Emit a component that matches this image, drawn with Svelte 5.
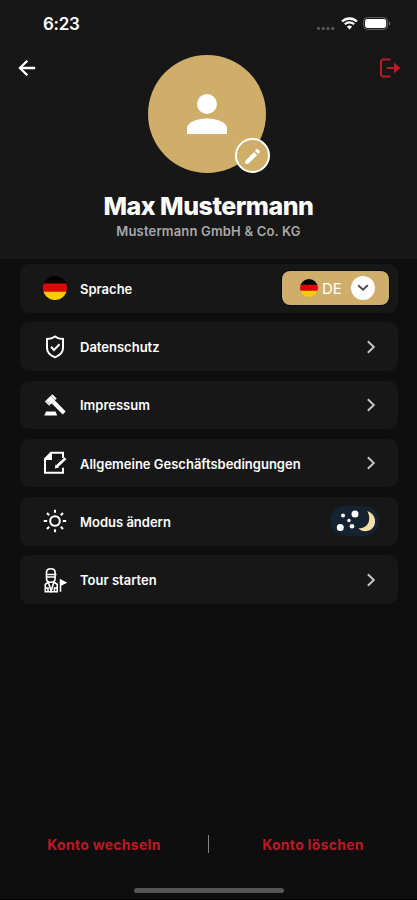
<script lang="ts">
	type Row = { id: string; label: string };

	const rows: Row[] = [
		{ id: 'language', label: 'Sprache' },
		{ id: 'privacy', label: 'Datenschutz' },
		{ id: 'imprint', label: 'Impressum' },
		{ id: 'terms', label: 'Allgemeine Geschäftsbedingungen' },
		{ id: 'mode', label: 'Modus ändern' },
		{ id: 'tour', label: 'Tour starten' }
	];
</script>

{#snippet flag(size: number)}
	<svg class="flag" width={size} height={size} viewBox="0 0 24 24">
		<clipPath id="flag-{size}"><circle cx="12" cy="12" r="12" /></clipPath>
		<g clip-path="url(#flag-{size})">
			<path fill="#000" d="M0 0h24v8H0z" />
			<path fill="#dc0808" d="M0 7.5h24V16H0z" />
			<path fill="#ffcb05" d="M0 15.7h24V24H0z" />
		</g>
	</svg>
{/snippet}

<div class="screen">
	<header>
		<div class="status">
			<span class="time">6:23</span>
			<div class="signals">
				<i class="dots"></i>
				<svg width="17" height="13" viewBox="0 0 17 13" fill="none" stroke="#fff">
					<path stroke-width="2.3" d="M1.1 4.5a10.6 10.6 0 0 1 14.8 0" />
					<path stroke-width="2.1" d="M3.8 7.3a6.7 6.7 0 0 1 9.4 0" />
					<path fill="#fff" stroke="none" d="M5.9 9.6a3.8 3.8 0 0 1 5.2 0l-2.6 2.9z" />
				</svg>
				<svg class="battery" width="28" height="13" viewBox="0 0 28 13">
					<rect x=".6" y=".6" width="24" height="11.8" rx="3.8" fill="none" stroke="#666" />
					<rect x="2" y="2" width="21.2" height="9" rx="2.4" fill="#fff" />
					<path d="M26 4.5c1.5.8 1.5 3.2 0 4z" fill="#777" />
				</svg>
			</div>
		</div>

		<div class="top">
			<button class="back" aria-label="Zurück">
				<svg width="18" height="18" viewBox="0 0 18 18" fill="none" stroke="#fff" stroke-width="2.3">
					<path d="M17.2 9H2.2M9.3 1.8 2 9l7.3 7.2" />
				</svg>
			</button>
			<div class="avatar">
				<svg width="40" height="40" viewBox="0 0 40 40" fill="#fff">
					<circle cx="20" cy="10" r="10" />
					<path d="M0 40v-5.500C0 27.500 12 24.500 20 24.500s20 3 20 10V40z" />
				</svg>
				<button class="edit" aria-label="Bearbeiten">
					<svg width="16" height="16" viewBox="0 0 16 16" fill="#fff">
						<path d="M.3 12.700v3h3l8.900-8.600-3.200-3.200zM14.700 4.600c.5-.5.5-1 0-1.500L12.900 1.300c-.5-.5-1-.5-1.500 0L9.900 2.800l3.300 3.300z" />
					</svg>
				</button>
			</div>
			<button class="logout" aria-label="Abmelden">
				<svg width="22" height="20" viewBox="0 0 22 20" fill="none" stroke="#bc1a24" stroke-width="2">
					<path d="M11.5 1.5H4Q2 1.5 2 3.5v13q0 2 2 2h7.5M7.800 10h12" />
					<path fill="#bc1a24" stroke="none" d="m15 4.400 6.500 5.600-6.500 5.600z" />
				</svg>
			</button>
		</div>

		<h1>Max Mustermann</h1>
		<p>Mustermann GmbH &amp; Co. KG</p>
	</header>

	<main>
		{#each rows as row}
			<div class="row">
				<div class="icon">
					{#if row.id === 'language'}
						{@render flag(24)}
					{:else if row.id === 'privacy'}
						<svg width="24" height="24" viewBox="0 0 24 24" fill="none" stroke="#fff" stroke-width="2">
							<path d="M12 1.5c2.3 1.7 5 2.4 8 2.4V13c0 4-3 7.3-8 9.4C7 20.3 4 17 4 13V3.9c3 0 5.7-.7 8-2.4z" />
							<path d="m8 11.8 3 3.2 5.5-5.7" />
						</svg>
					{:else if row.id === 'imprint'}
						<svg width="24" height="24" viewBox="0 0 24 24" fill="#fff">
							<path d="M3 18.5h9.5l1.7 4H1.3z" />
							<path d="m11 6.6 11.7 11.8-3 3.2L8.1 9.8z" />
							<path d="m9.3 1.2 4.4 4.2-7.5 7.4-4.4-4.3z" />
							<path stroke="#171717" stroke-width=".4" d="m7.4 2.2 5 5M2.5 7l5 5" />
						</svg>
					{:else if row.id === 'terms'}
						<svg width="24" height="24" viewBox="0 0 24 24" fill="none" stroke="#fff" stroke-width="2">
							<path d="M20 7V1.8H8L2 8v13.7h18v-5" />
							<path fill="#fff" stroke="none" d="M9 1.500V9H1.500z" />
							<path stroke-width="2.6" d="m14 15.3 8.500-8.100" />
							<path fill="#fff" stroke="none" d="m12.500 13.500 3.500 3-4.200 1z" />
						</svg>
					{:else if row.id === 'mode'}
						<svg width="24" height="24" viewBox="0 0 24 24" fill="none" stroke="#fff" stroke-width="2.1">
							<circle cx="12" cy="12" r="4.8" />
							<path d="M12 .8v3M12 20.2v3M.8 12h3.400M19.800 12h3.400M4 4l2.200 2.200M17.800 17.800 20 20M20 4l-2.200 2.200M6.200 17.800 4 20" />
						</svg>
					{:else}
						<svg width="24" height="26" viewBox="0 0 24 26" fill="none" stroke="#fff" stroke-width="1.6">
							<path d="M3.500 7.500V5.300Q3.500 1.800 7.800 1.800t4.300 3.500v2.200M2.500 7.500h11M3.500 10h8.600M3.500 8v3.500q0 3.800 4.300 3.800t4.300-3.800V8" />
							<path d="M5.500 15 2.300 17.300v7.400h11.900v-7.400L10.700 15M5.500 15.500l2.600 8.700 2.600-8.700M5 20.300v4M11.500 20.300v4M2.500 21h3M11 21h3" />
							<path d="M17.500 12.300v12.500" />
							<path fill="#fff" d="M18 13.500l4.500 2.200-4.500 2.200z" />
						</svg>
					{/if}
				</div>
				<span class="label">{row.label}</span>

				{#if row.id === 'language'}
					<button class="select">
						{@render flag(18)}
						<span>DE</span>
						<i>
							<svg width="12" height="8" viewBox="0 0 12 8" fill="none" stroke="#4b4b4b" stroke-width="1.9">
								<path d="m1.200 1.300 4.800 4.400 4.800-4.400" />
							</svg>
						</i>
					</button>
				{:else if row.id === 'mode'}
					<svg class="toggle" width="49" height="30" viewBox="0 0 49 30">
						<rect width="49" height="30" rx="15" fill="#152330" />
						<g fill="#fff">
							<circle cx="25" cy="8" r="3.5" />
							<circle cx="10.3" cy="21.5" r="3.5" />
							<circle cx="13" cy="9.6" r="2" />
							<circle cx="19" cy="14.5" r="1.7" />
							<circle cx="22" cy="20.3" r="2.3" />
						</g>
						<path fill="#f5dda9" d="M37.300 5C46.500 8 47.500 19 41 23.500 36.500 26.300 31 25.500 28.500 22.300 38 22.600 42 14 37.300 5z" />
					</svg>
				{:else}
					<svg class="chevron" width="10" height="14" viewBox="0 0 10 14" fill="none" stroke="#c8c8c8" stroke-width="1.9">
						<path d="m1.800 1.200 6 5.800-6 5.800" />
					</svg>
				{/if}
			</div>
		{/each}
	</main>

	<footer>
		<div class="accounts">
			<button>Konto wechseln</button>
			<i></i>
			<button>Konto löschen</button>
		</div>
		<div class="home"></div>
	</footer>
</div>

<style>
	:global(body) {
		margin: 0;
		background: #0e0e0e;
	}

	.screen {
		width: 417px;
		height: 900px;
		box-sizing: border-box;
		display: flex;
		flex-direction: column;
		overflow: hidden;
		background: #0e0e0e;
		border-bottom: 1px solid #000;
		color: #fff;
		font-family: Inter, 'Liberation Sans', sans-serif;
	}

	svg {
		display: block;
		flex: none;
	}

	button {
		border: 0;
		padding: 0;
		background: none;
		color: inherit;
		font: inherit;
		letter-spacing: inherit;
	}

	header {
		height: 259px;
		background: #171717;
		text-align: center;
	}

	.status {
		height: 55px;
		box-sizing: border-box;
		padding: 14px 26px 0 43px;
		display: flex;
		justify-content: space-between;
		align-items: flex-start;
	}

	.time {
		font-size: 17px;
		line-height: 21px;
		font-weight: 600;
		letter-spacing: -0.3px;
	}

	.signals {
		display: flex;
		padding-top: 3px;
	}

	.dots {
		width: 19px;
		height: 3px;
		margin: 10px 6px 0 0;
		background: radial-gradient(circle, #5a5a5a 1.2px, transparent 1.8px) 0 0 / 4.8px 3px;
	}

	.battery {
		margin-left: 5px;
	}

	.top {
		height: 118px;
		padding: 0 16px 0 18px;
		display: grid;
		grid-template-columns: 130px 118px 1fr;
		align-items: start;
	}

	.back {
		padding-top: 4px;
	}

	.logout {
		padding-top: 3px;
		justify-self: end;
	}

	.avatar {
		position: relative;
		width: 118px;
		height: 118px;
		display: grid;
		place-items: center;
		background: #cfae69;
		border-radius: 50%;
	}

	.edit {
		position: absolute;
		right: -4px;
		bottom: 0;
		width: 35px;
		height: 35px;
		box-sizing: border-box;
		display: grid;
		place-items: center;
		background: #cfae69;
		border: 2px solid #fff;
		border-radius: 50%;
	}

	h1 {
		margin: 17px 0 0;
		font-size: 25px;
		line-height: 32px;
		font-weight: 800;
		letter-spacing: -0.5px;
	}

	p {
		margin: 0;
		font-size: 13px;
		line-height: 18px;
		font-weight: 600;
		letter-spacing: 0.17px;
		color: #a9a9a9;
	}

	main {
		padding: 5px 19px 0 20px;
		display: flex;
		flex-direction: column;
		gap: 9.8px;
	}

	.row {
		height: 48.5px;
		box-sizing: border-box;
		padding: 0 9px 0 23px;
		display: flex;
		align-items: center;
		background: #171717;
		border-radius: 9px;
	}

	.icon {
		width: 24px;
		margin-right: 13px;
	}

	.label {
		flex: 1;
		padding-top: 1px;
		font-size: 13px;
		line-height: 18px;
		font-weight: 600;
		white-space: nowrap;
	}

	.select {
		width: 107px;
		height: 34px;
		padding-left: 18px;
		box-sizing: border-box;
		display: flex;
		align-items: center;
		background: #cfae69;
		border-radius: 8px;
		box-shadow: 0 0 0 1px #0a0a0a;
	}

	.select span {
		margin-left: 4px;
		width: 29px;
		font-size: 15px;
		text-align: left;
	}

	.select i {
		width: 24px;
		height: 24px;
		display: grid;
		place-items: center;
		background: #fff;
		border-radius: 50%;
	}

	.toggle {
		margin-right: 10px;
	}

	.chevron {
		margin-right: 13px;
	}

	footer {
		margin-top: auto;
		height: 65px;
	}

	.accounts {
		height: 20px;
		display: grid;
		grid-template-columns: 208px 1px 208px;
		align-items: center;
		color: #bc1a24;
		font-size: 14px;
		font-weight: 700;
		letter-spacing: 0.28px;
	}

	.accounts i {
		height: 18px;
		background: #858585;
	}

	.home {
		width: 150px;
		height: 5px;
		margin: 34px auto 0;
		background: #555;
		border-radius: 3px;
	}
</style>
